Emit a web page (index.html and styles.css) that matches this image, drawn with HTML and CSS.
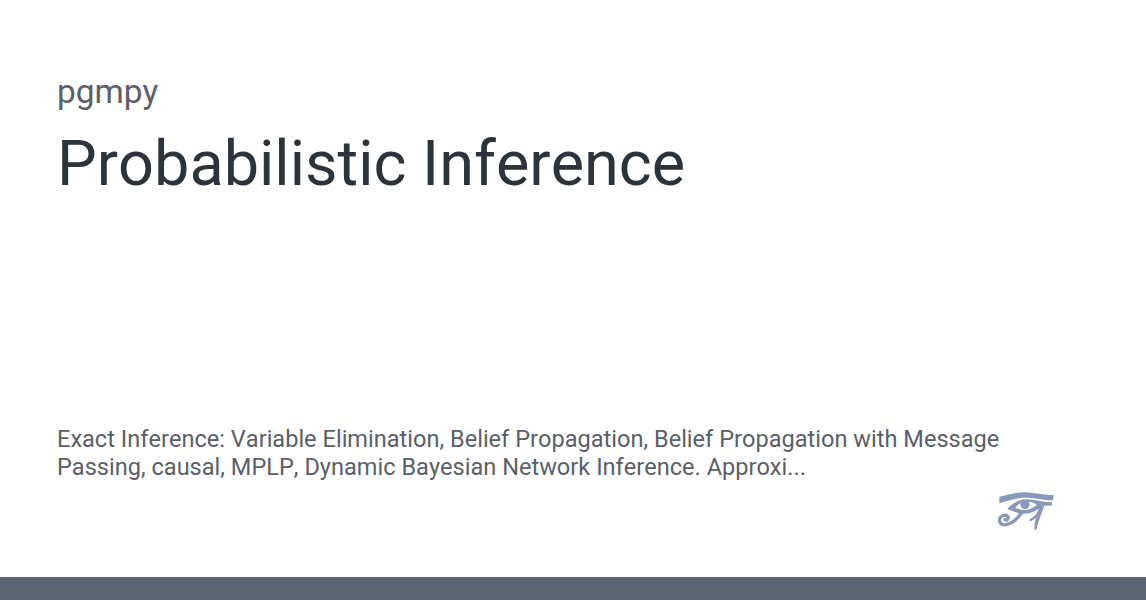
FILE: index.html
```html
<!DOCTYPE html>
<html lang="en">
<head>
<meta charset="utf-8">
<title>Probabilistic Inference</title>
<link rel="stylesheet" href="styles.css">
</head>
<body>
<main class="card">
  <div class="head">
    <div class="site">pgmpy</div>
    <h1 class="title">Probabilistic Inference</h1>
  </div>
  <p class="desc">Exact Inference: Variable Elimination, Belief Propagation, Belief Propagation with Message Passing, causal, MPLP, Dynamic Bayesian Network Inference. Approxi...</p>
  <div class="logo-row">
    <svg class="eye" viewBox="54 30 180 120" aria-hidden="true">
      <path class="fill" d="M58 47C85 42 110 34 135 34C165 34 195 44 221 42L219 58C195 59 165 50 135 50C110 50 85 60 58 67Z"/>
      <path class="fill" d="M82 84C98 66 118 55 138 55C165 55 190 65 216 64L215 74L186 74C174 87 155 97 135 98C118 99 100 92 82 84ZM106 81C116 85 125 87 135 87C150 86 161 80 170 72C165 67 158 64 150 63C135 59 118 64 106 81Z"/>
      <circle class="fill" cx="135" cy="70" r="14"/>
      <path class="line" d="M124 96C112 114 95 128 78 131C64 134 56 123 59 113C63 103 76 100 83 106C87 112 82 119 75 116"/>
      <path class="fill" d="M180 76L193 74C186 92 176 118 169 146L163 146C164 122 168 98 180 76Z"/>
      <path class="thin" d="M178 92C172 102 164 111 152 117"/>
    </svg>
  </div>
</main>
<footer class="bar"></footer>
</body>
</html>
```
FILE: styles.css
```css
html, body {
  margin: 0;
  height: 100%;
  background: #fff;
}
body {
  display: flex;
  flex-direction: column;
  height: 600px;
  overflow: hidden;
  font-family: Roboto, "Liberation Sans", sans-serif;
  font-kerning: none;
}
.card {
  flex: 1;
  display: flex;
  flex-direction: column;
  padding: 72px 88px 46px 57px;
}
.head {
  flex: 1;
}
.site {
  font-size: 33.4px;
  line-height: 40px;
  color: #5c6068;
}
.title {
  margin: 14px 0 0;
  font-size: 63px;
  line-height: 76px;
  font-weight: 400;
  color: #2d333b;
}
.desc {
  margin: 0;
  font-size: 23.55px;
  line-height: 28px;
  color: #5a5f69;
  word-spacing: 0.1px;
}
.logo-row {
  display: flex;
  justify-content: flex-end;
  margin-top: 10px;
}
.eye {
  width: 60px;
  height: 40px;
  display: block;
  filter: blur(0.4px);
}
.fill {
  fill: #8a99ba;
  fill-rule: evenodd;
}
.line, .thin {
  fill: none;
  stroke: #8a99ba;
  stroke-linecap: round;
}
.line {
  stroke-width: 10;
}
.thin {
  stroke-width: 7;
}
.bar {
  height: 23px;
  background: #5c6470;
}
```
